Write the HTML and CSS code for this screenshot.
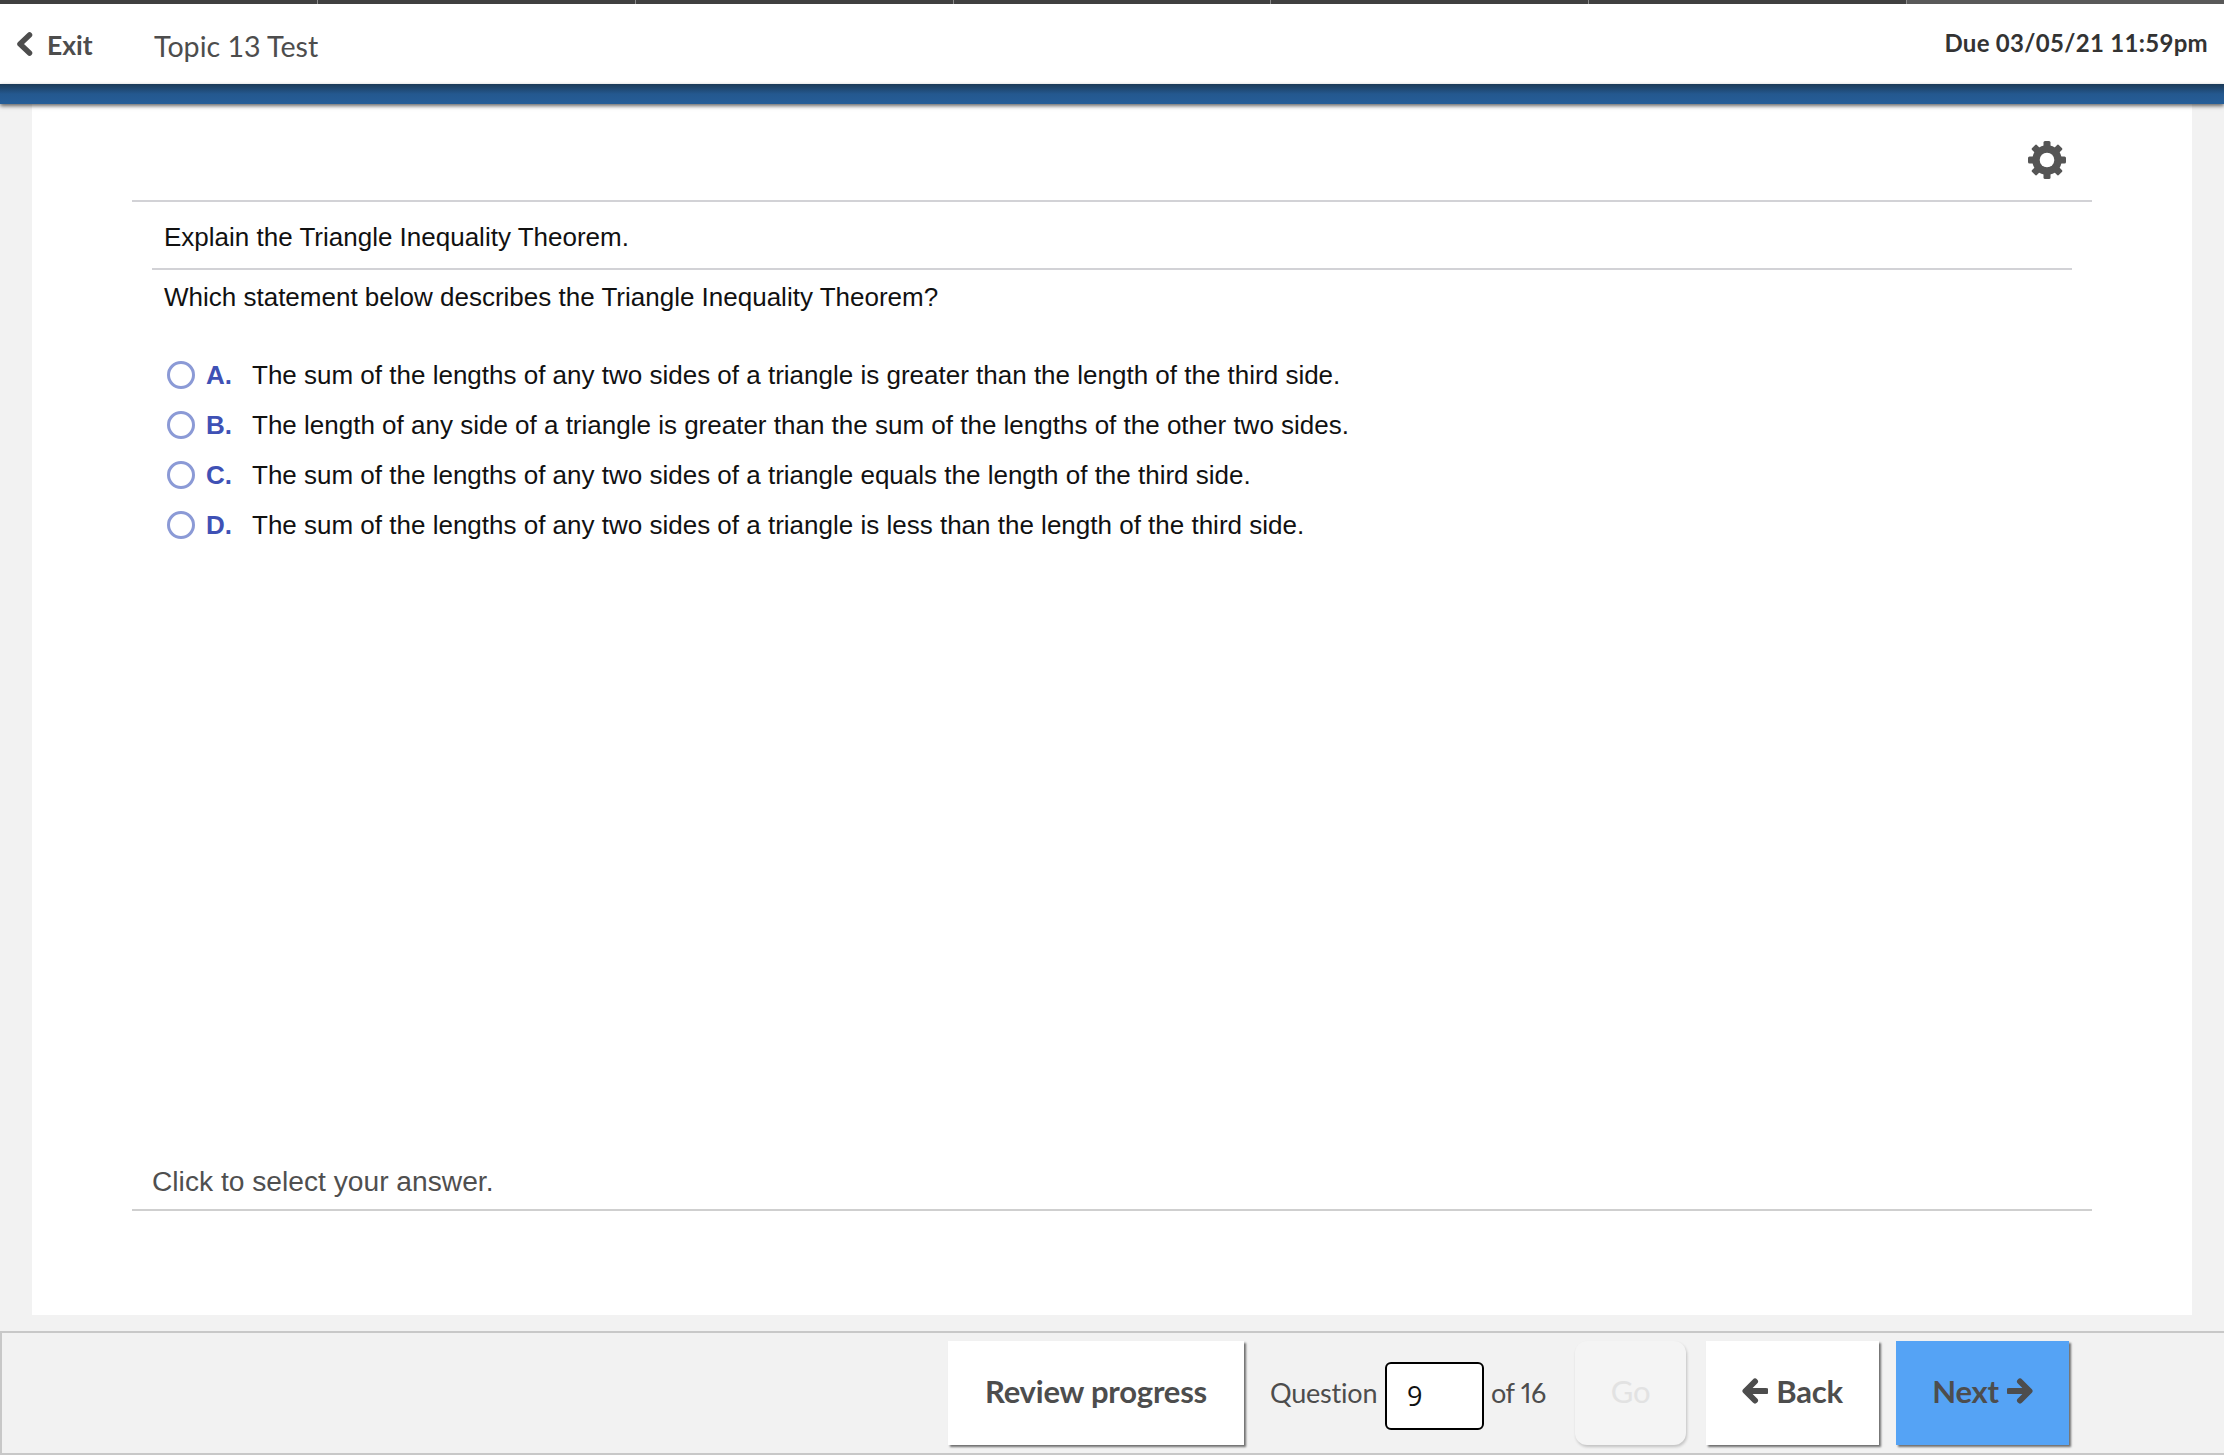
FILE: index.html
```html
<!DOCTYPE html>
<html lang="en">
<head>
<meta charset="utf-8">
<title>Topic 13 Test</title>
<link rel="stylesheet" href="styles.css">
</head>
<body>
<div class="progress">
  <span class="seg"></span><span class="seg"></span><span class="seg"></span><span class="seg"></span><span class="seg"></span><span class="seg"></span><span class="seg seg-last"></span>
</div>
<header class="topbar">
  <a class="exit">
    <svg class="chev" viewBox="0 0 17 24" aria-hidden="true"><path d="M13.5 3 L4 12 L13.5 21" fill="none" stroke="#4d4d4d" stroke-width="5.5" stroke-linecap="round" stroke-linejoin="round"/></svg>
    <span>Exit</span>
  </a>
  <span class="title">Topic 13 Test</span>
  <span class="due">Due 03/05/21 11:59pm</span>
</header>
<div class="bluebar"></div>
<main class="sheet">
  <div class="tools">
    <svg class="gear" viewBox="0 0 40 40" aria-hidden="true">
      <g fill="#555"><rect x="16.5" y="1" width="7" height="38" rx="1.5"/><rect x="16.5" y="1" width="7" height="38" rx="1.5" transform="rotate(45 20 20)"/><rect x="16.5" y="1" width="7" height="38" rx="1.5" transform="rotate(90 20 20)"/><rect x="16.5" y="1" width="7" height="38" rx="1.5" transform="rotate(135 20 20)"/></g>
      <circle cx="20" cy="20" r="11" fill="none" stroke="#555" stroke-width="7.5"/>
      <circle cx="20" cy="20" r="7.3" fill="#fff"/>
    </svg>
  </div>
  <section class="question">
    <p class="topic">Explain the Triangle Inequality Theorem.</p>
    <p class="stem">Which statement below describes the Triangle Inequality Theorem?</p>
    <ul class="choices">
      <li class="choice"><span class="radio"></span><b class="letter">A.</b><span>The sum of the lengths of any two sides of a triangle is greater than the length of the third side.</span></li>
      <li class="choice"><span class="radio"></span><b class="letter">B.</b><span>The length of any side of a triangle is greater than the sum of the lengths of the other two sides.</span></li>
      <li class="choice"><span class="radio"></span><b class="letter">C.</b><span>The sum of the lengths of any two sides of a triangle equals the length of the third side.</span></li>
      <li class="choice"><span class="radio"></span><b class="letter">D.</b><span>The sum of the lengths of any two sides of a triangle is less than the length of the third side.</span></li>
    </ul>
  </section>
  <p class="hint">Click to select your answer.</p>
</main>
<footer class="footer">
  <button class="btn btn-review">Review progress</button>
  <span class="qlabel">Question</span>
  <span class="qinput">9</span>
  <span class="qlabel qof">of 16</span>
  <button class="btn btn-go">Go</button>
  <button class="btn btn-back">
    <svg class="arrow" viewBox="0 0 26 26" aria-hidden="true"><path d="M13 3.5 L3.5 13 L13 22.5 M4 13 H24" fill="none" stroke="#4d4d4d" stroke-width="6" stroke-linejoin="round" stroke-linecap="round"/></svg>
    <span>Back</span>
  </button>
  <button class="btn btn-next">
    <span>Next</span>
    <svg class="arrow" viewBox="0 0 26 26" aria-hidden="true"><path d="M13 3.5 L22.5 13 L13 22.5 M22 13 H2" fill="none" stroke="#4d4d4d" stroke-width="6" stroke-linejoin="round" stroke-linecap="round"/></svg>
  </button>
</footer>
</body>
</html>
```
FILE: styles.css
```css
* { box-sizing: border-box; }
html, body { margin: 0; height: 100%; }
body {
  width: 2224px;
  height: 1455px;
  overflow: hidden;
  background: #f2f2f2;
  display: flex;
  flex-direction: column;
  font-family: "Liberation Sans", Arial, sans-serif;
}
.progress { display: flex; height: 4px; flex: none; background: #444; }
.seg { flex: 1; background: #404040; border-right: 1px solid #8a8a8a; }
.seg-last { background: #595959; border-right: 0; }
.topbar {
  flex: none;
  height: 80px;
  background: #fff;
  display: flex;
  align-items: center;
  padding: 0 16px;
  font-family: Lato, sans-serif;
  color: #4d4d4d;
}
.exit { display: flex; align-items: center; gap: 14px; font-size: 26.5px; font-weight: 700; width: 138px; padding-top: 2px; }
.chev { width: 17px; height: 24px; margin-top: -2px; }
.title { font-size: 28.6px; padding-top: 3px; }
.due { margin-left: auto; font-size: 24px; font-weight: 700; color: #333; padding-bottom: 4px; letter-spacing: .3px; }
.bluebar {
  flex: none;
  height: 20px;
  background: linear-gradient(#1b3a57, #24588f 50%, #265e98);
  box-shadow: 0 2px 4px rgba(0,0,0,.6);
  position: relative;
}
.sheet {
  flex: none;
  height: 1211px;
  margin: 0 32px;
  width: 2160px;
  background: #fff;
  padding: 0 100px;
  display: flex;
  flex-direction: column;
}
.tools {
  height: 98px;
  flex: none;
  border-bottom: 2px solid #d2d2d6;
  display: flex;
  justify-content: flex-end;
  align-items: flex-start;
  padding: 36px 25px 0 0;
}
.gear { width: 40px; height: 40px; }
.question { flex: 1; padding: 0 20px; font-size: 26px; color: #111; }
.topic {
  margin: 0;
  height: 68px;
  padding: 18px 12px 0;
  line-height: 34px;
  border-bottom: 2px solid #d2d2d6;
}
.stem { margin: 0; padding: 10px 12px 0; line-height: 34px; height: 58px; }
.choices { list-style: none; margin: 22px 0 0; padding: 0 0 0 15px; }
.choice { display: flex; align-items: center; height: 50px; }
.radio {
  width: 28px;
  height: 28px;
  border-radius: 50%;
  border: 3px solid #8b9ad6;
  flex: none;
  margin-right: 11px;
}
.letter { color: #3f51b5; width: 46px; flex: none; }
.hint {
  flex: none;
  margin: 0;
  height: 48px;
  padding-left: 20px;
  font-size: 28.2px;
  line-height: 36px;
  color: #4f4f4f;
  border-bottom: 2px solid #cfcfcf;
}
.sheet::after { content: ""; height: 104px; flex: none; }
.footer {
  margin-top: 16px;
  flex: 1;
  border: 2px solid #c8c8c8;
  border-right: 0;
  background: #f2f2f2;
  display: flex;
  align-items: center;
  padding: 6px 0 6px 946px;
  font-family: Lato, sans-serif;
  color: #4d4d4d;
}
.btn {
  height: 104px;
  border: 0;
  padding: 0 0 4px;
  background: #fff;
  color: #4d4d4d;
  font: 700 31px Lato, sans-serif;
  letter-spacing: -.2px;
  box-shadow: 2px 2px 2px rgba(0,0,0,.55);
  display: flex;
  align-items: center;
  justify-content: center;
  gap: 8px;
  flex: none;
}
.btn-review { width: 296px; margin-right: 26px; }
.qlabel { font-size: 27px; letter-spacing: -.2px; width: 106px; white-space: nowrap; flex: none; font-variant-numeric: proportional-nums; padding-bottom: 2px; }
.qinput {
  width: 99px;
  height: 68px;
  margin: 6px 7px 0 9px;
  border: 2px solid #000;
  border-radius: 6px;
  background: #fff;
  color: #111;
  font: 27px "Open Sans", sans-serif;
  line-height: 64px;
  padding-left: 20px;
  flex: none;
}
.qof { width: 84px; letter-spacing: -.4px; }
.btn-go {
  width: 111px;
  margin-right: 20px;
  background: #f4f4f4;
  color: #e2e2e2;
  border-radius: 12px;
  font-weight: 400;
  box-shadow: 1px 2px 3px rgba(0,0,0,.2);
}
.btn-back { width: 173px; margin-right: 17px; }
.btn-next { width: 173px; background: #55a3f5; }
.arrow { width: 26px; height: 26px; }
```
